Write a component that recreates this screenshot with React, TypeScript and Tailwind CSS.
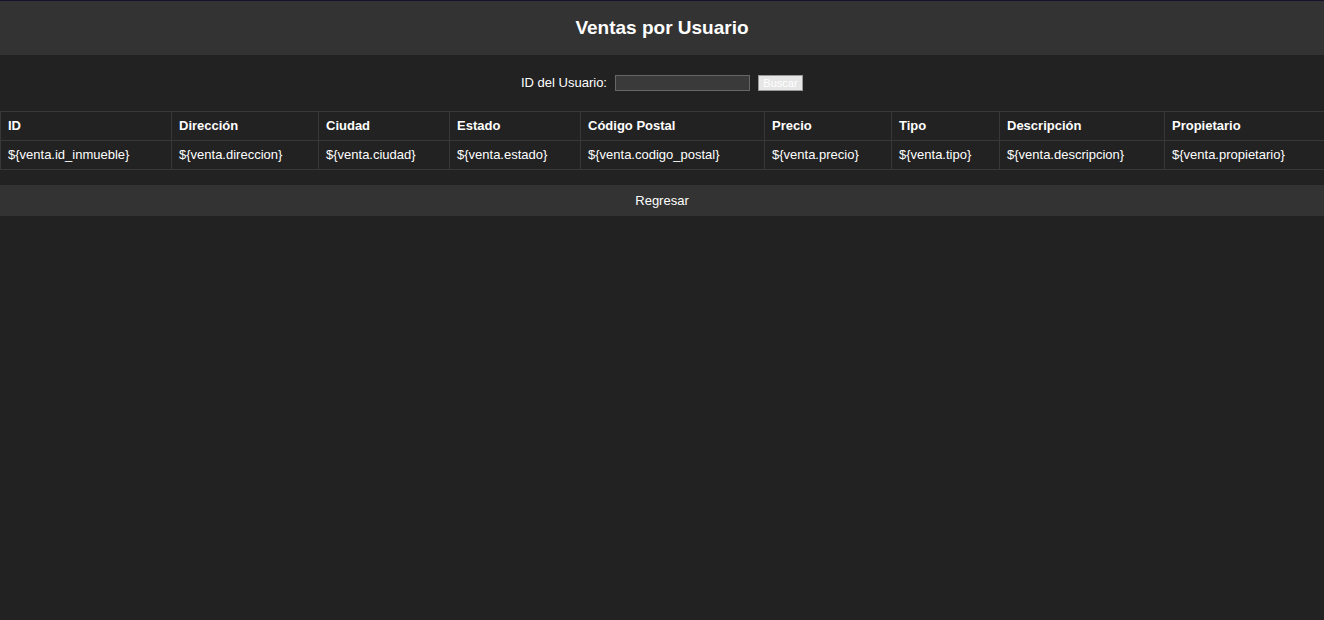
const columns = [
  { label: "ID", field: "${venta.id_inmueble}", w: "w-[171px]" },
  { label: "Dirección", field: "${venta.direccion}", w: "w-[147px]" },
  { label: "Ciudad", field: "${venta.ciudad}", w: "w-[131px]" },
  { label: "Estado", field: "${venta.estado}", w: "w-[131px]" },
  { label: "Código Postal", field: "${venta.codigo_postal}", w: "w-[184px]" },
  { label: "Precio", field: "${venta.precio}", w: "w-[127px]" },
  { label: "Tipo", field: "${venta.tipo}", w: "w-[108px]" },
  { label: "Descripción", field: "${venta.descripcion}", w: "w-[165px]" },
  { label: "Propietario", field: "${venta.propietario}", w: "w-[160px]" },
];

export default function App() {
  return (
    <div className="min-h-[620px] border-t border-[#15132a] bg-[#222222] font-['Liberation_Sans',Arial,sans-serif] text-white">
      <header className="flex h-[54px] items-center justify-center bg-[#333333]">
        <h1 className="text-[19px] font-bold">Ventas por Usuario</h1>
      </header>

      <form className="flex items-center justify-center py-5" onSubmit={(e) => e.preventDefault()}>
        <label htmlFor="usuario" className="mr-2 text-[13px] leading-4">
          ID del Usuario:
        </label>
        <input
          id="usuario"
          type="text"
          className="h-4 w-[135px] border border-[#666] bg-[#3a3a3a] px-1 text-[11px] text-white outline-none"
        />
        <button
          type="submit"
          className="ml-2 h-4 w-[45px] border border-[#999] bg-[#e6e6e6] text-[11px] leading-3 text-white"
        >
          Buscar
        </button>
      </form>

      <table className="w-full table-fixed border-collapse text-[13px]">
        <thead>
          <tr>
            {columns.map((c) => (
              <th key={c.label} className={`${c.w} border border-[#383838] px-[7px] py-[6px] text-left font-bold leading-4`}>
                {c.label}
              </th>
            ))}
          </tr>
        </thead>
        <tbody>
          <tr>
            {columns.map((c) => (
              <td key={c.label} className="border border-[#383838] px-[7px] py-[6px] leading-4">
                {c.field}
              </td>
            ))}
          </tr>
        </tbody>
      </table>

      <div className="mt-[15px] flex h-[31px] items-center justify-center bg-[#333333] text-[13px]">
        Regresar
      </div>
    </div>
  );
}
